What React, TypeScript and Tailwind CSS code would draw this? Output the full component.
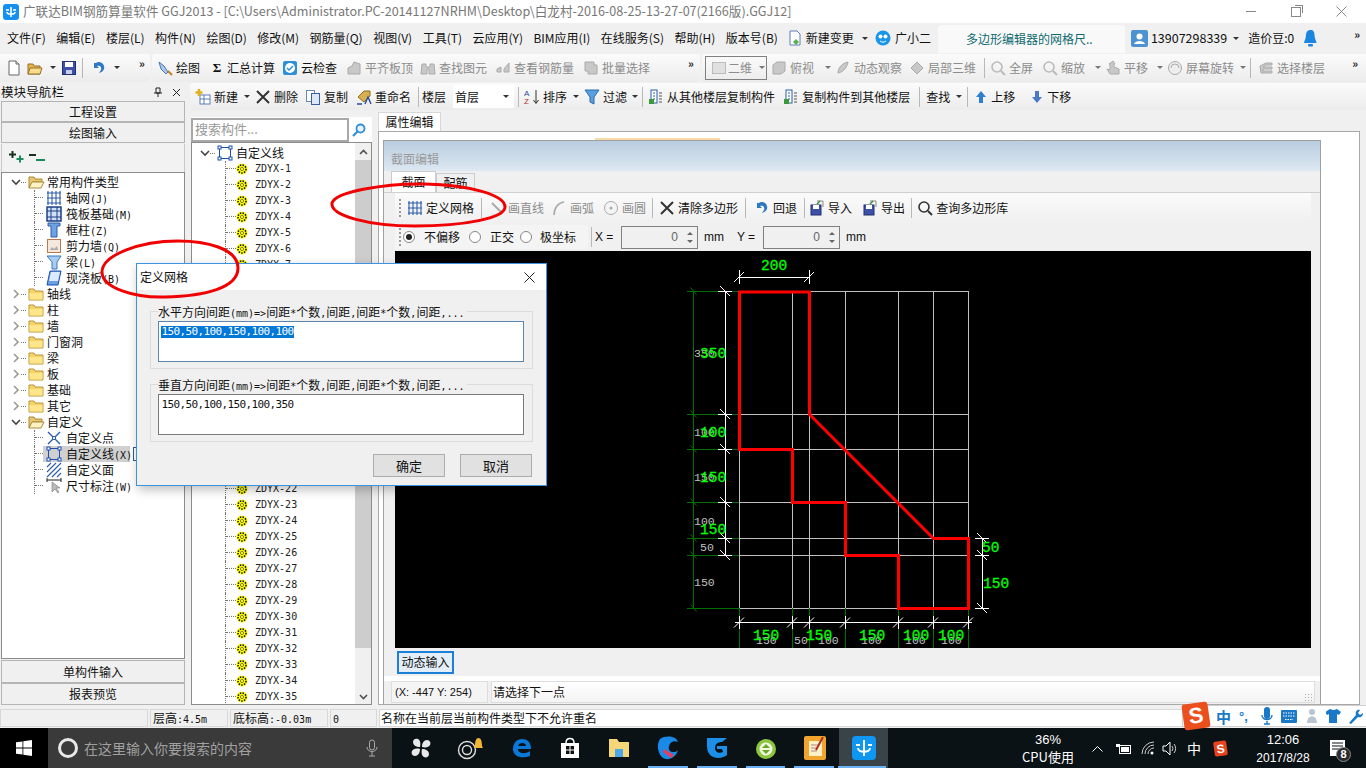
import React from "react";

const mono = "font-['DejaVu_Sans_Mono','Liberation_Mono',monospace] text-[10px]";

// ascii in the old bitmap font is half width, so split it from the chinese
function Mixed({ t }: { t: string }) {
  const parts = t.split(/([\x00-\x7f]+)/).filter(Boolean);
  return (
    <span className="whitespace-pre">
      {parts.map((p, i) =>
        /^[\x00-\x7f]/.test(p) ? (
          <span key={i} className={mono}>{p}</span>
        ) : (
          <span key={i} className="text-[12px]">{p}</span>
        )
      )}
    </span>
  );
}

const Drop = ({ className = "" }: { className?: string }) => (
  <span className={`w-0 h-0 shrink-0 border-l-[3px] border-r-[3px] border-t-[3px] border-l-transparent border-r-transparent border-t-[#333] ${className}`} />
);
const Sep = ({ className = "" }: { className?: string }) => (
  <span className={`w-px h-[20px] shrink-0 bg-[#b8b8b8] ${className}`} />
);
const More = ({ className = "" }: { className?: string }) => (
  <span className={`text-[11px] font-bold leading-none text-[#222] -mt-2 ${className}`}>»</span>
);

function Tool({ icon, label, off, className = "", iconWidth = "w-4" }: { icon: React.ReactNode; label: string; off?: boolean; className?: string; iconWidth?: string }) {
  return (
    <span className={`flex items-center shrink-0 ${className} ${off ? "text-[#8c8c8c]" : "text-[#111]"}`}>
      <span className={`${iconWidth} h-4 flex items-center justify-center shrink-0 mr-[3px]`}>{icon}</span>
      <span className="whitespace-nowrap">{label}</span>
    </span>
  );
}

const Svg = ({ children, size = 16, className = "" }: { children: React.ReactNode; size?: number; className?: string }) => (
  <svg width={size} height={size} viewBox="0 0 16 16" className={`shrink-0 ${className}`}>{children}</svg>
);

const DocIco = () => <Svg><path d="M3 1h7l3 3v11H3z" fill="#fff" stroke="#666" /><path d="M10 1v3h3" fill="#ddd" stroke="#666" /></Svg>;
const OpenIco = () => <Svg><path d="M1 4h5l1 2h6v8H1z" fill="#e8b54a" stroke="#94702a" /><path d="M3 8h12l-2 6H1z" fill="#f7dc8e" stroke="#94702a" /></Svg>;
const SaveIco = () => <Svg><rect x="1.5" y="1.5" width="13" height="13" fill="#3d4fa8" stroke="#22306e" /><rect x="4" y="2" width="8" height="5" fill="#fff" /><rect x="5" y="10" width="6" height="4" fill="#c9cfe6" /></Svg>;
const UndoIco = () => <Svg><path d="M3 3v5h5L6 6c3-1 5 1 4 4l-2 3c4-1 6-4 5-7-1-4-6-5-8-3z" fill="#2f78c4" /></Svg>;
const CrossIco = ({ off }: { off?: boolean }) => <Svg><path d="M2 2l12 12M14 2L2 14" stroke={off ? "#999" : "#333"} strokeWidth="2" /></Svg>;
const ChkIco = () => <Svg><rect x="1" y="1" width="14" height="14" rx="2" fill="#2e8fd8" /><circle cx="8" cy="8" r="5" fill="#fff" /><path d="M5 8l2 2 4-4" stroke="#2e8fd8" strokeWidth="1.5" fill="none" /></Svg>;
const GrayBlob = ({ d = "M3 12L9 3l4 2-3 8z" }: { d?: string }) => <Svg><path d={d} fill="#c8c8c8" stroke="#aaa" /></Svg>;
const LensIco = ({ c = "#bbb" }: { c?: string }) => <Svg><circle cx="7" cy="7" r="5" fill="none" stroke={c} strokeWidth="1.6" /><path d="M11 11l4 4" stroke={c} strokeWidth="2" /></Svg>;
const GridIco = ({ c = "#2a5caa" }: { c?: string }) => <Svg><path d="M2 1v14M6 1v14M10 1v14M14 1v14M1 3h14M1 8h14M1 13h14" stroke={c} strokeWidth="1.1" /></Svg>;
const SquareIco = () => <Svg><rect x="2.5" y="2.5" width="11" height="11" fill="none" stroke="#1c4fae" /><rect x="1" y="1" width="3" height="3" fill="#fff" stroke="#1c4fae" /><rect x="12" y="1" width="3" height="3" fill="#fff" stroke="#1c4fae" /><rect x="1" y="12" width="3" height="3" fill="#fff" stroke="#1c4fae" /><rect x="12" y="12" width="3" height="3" fill="#fff" stroke="#1c4fae" /></Svg>;
const SheetIco = () => <Svg><rect x="3" y="1" width="6" height="13" fill="#fff" stroke="#2a5caa" /><path d="M5 4h2M5 7h2M5 10h2" stroke="#2a5caa" /><rect x="1" y="10" width="5" height="5" fill="#3a9a3a" /><path d="M11 4h3M11 7h3M11 10h3M11 13h3" stroke="#555" /></Svg>;
const DiskIco = () => <Svg><rect x="2" y="5" width="10" height="10" fill="#3d4fa8" stroke="#22306e" /><rect x="4" y="5" width="6" height="4" fill="#fff" /><path d="M8 1h6v6" fill="none" stroke="#888" /><path d="M11 1l-3 3" stroke="#3a8a3a" strokeWidth="1.5" /></Svg>;

const Folder = ({ open }: { open?: boolean }) =>
  open ? (
    <svg width="17" height="13" viewBox="0 0 17 13"><path d="M1 1h5l1 2h7v3H5L1 12z" fill="#e7c66e" stroke="#a98a3c" /><path d="M4 6h12l-3 6H1z" fill="#fff2c4" stroke="#a98a3c" /></svg>
  ) : (
    <svg width="16" height="13" viewBox="0 0 16 13"><path d="M1 1h5l1 2h8v9H1z" fill="#f6d267" stroke="#b8973f" /><path d="M1.5 5h13v6.5h-13z" fill="#ffe68a" /></svg>
  );
const Chev = ({ open }: { open?: boolean }) => (
  <svg width="10" height="10" viewBox="0 0 10 10">
    <path d={open ? "M1 3l4 4 4-4" : "M3 1l4 4-4 4"} fill="none" stroke={open ? "#444" : "#9a9a9a"} strokeWidth="1.6" />
  </svg>
);
const Gear = () => (
  <svg width="12" height="12" viewBox="0 0 12 12"><circle cx="6" cy="6" r="5.6" fill="#ffff00" /><circle cx="6" cy="6" r="4" fill="none" stroke="#111" strokeWidth="1.6" strokeDasharray="1.5 1.2" /><circle cx="6" cy="6" r="1.6" fill="#ffff00" stroke="#333" strokeWidth=".6" /></svg>
);

const rootRows = [
  { t: "轴线" }, { t: "柱" }, { t: "墙" }, { t: "门窗洞" }, { t: "梁" }, { t: "板" }, { t: "基础" }, { t: "其它" },
];

const childIcons: Record<string, React.ReactNode> = {
  "轴网(J)": <GridIco />,
  "筏板基础(M)": <Svg><rect x="1" y="1" width="14" height="14" fill="#cfe0f5" stroke="#1c3f86" strokeWidth="1.5" /><path d="M1 5h14M1 11h14M5 1v14M11 1v14" stroke="#1c3f86" /></Svg>,
  "框柱(Z)": <Svg><path d="M2 1h12v3h-3v11H5V4H2z" fill="#6fa3e0" stroke="#2f5ea8" /></Svg>,
  "剪力墙(Q)": <Svg><rect x="1.5" y="1.5" width="13" height="13" fill="#f4e8dc" stroke="#b9794a" /><path d="M4 12l2-3 2 2 3-3 1 4z" fill="#aaa" /></Svg>,
  "梁(L)": <Svg><path d="M1 2h14l-4 6v7H6V8z" fill="#a9cdf0" stroke="#3a77b8" /></Svg>,
  "现浇板(B)": <Svg><path d="M4 1h11l-3 14H1z" fill="#6b9fe6" stroke="#1c4fae" /><path d="M5 2h9l-2 9H3z" fill="#dbe9fb" /></Svg>,
  "自定义点": <Svg><path d="M2 2l12 12M14 2L2 14" stroke="#2a5caa" strokeWidth="1.4" /><circle cx="8" cy="8" r="1.6" fill="#fff" stroke="#2a5caa" /></Svg>,
  "自定义线(X)": <SquareIco />,
  "自定义面": <Svg><path d="M1 5l4-4M1 10l9-9M1 15L15 1M6 15l9-9M11 15l4-4" stroke="#2a5caa" strokeWidth="1.1" /></Svg>,
  "尺寸标注(W)": <Svg><path d="M1 2h14M1 0v4M15 0v4" stroke="#222" /><path d="M6 4v10l3-3 3 4 1-1-3-4h4z" fill="#bbb" stroke="#777" strokeWidth=".6" /></Svg>,
};

function ChildRow({ t, selected }: { t: string; selected?: boolean }) {
  return (
    <div className="h-4 flex items-center pl-[32px]">
      <span className="w-[9px] self-stretch shrink-0 border-l border-dotted border-[#777]">
        <span className="block h-2 border-b border-dotted border-[#777]" />
      </span>
      <span className={`h-4 flex items-center pl-[3px] shrink-0 ${selected ? "bg-[#d0d0d0] w-[87px]" : ""}`}>
        <span className="w-4 h-4 shrink-0 mr-[4px] flex items-center justify-center">{childIcons[t]}</span>
        <Mixed t={t} />
      </span>
      {selected && <span className="ml-[3px] w-[8px] h-[14px] border border-[#2a5caa] bg-white" />}
    </div>
  );
}

function RootRow({ t, open }: { t: string; open?: boolean }) {
  return (
    <div className="h-4 flex items-center pl-2">
      <span className="w-[11px] flex justify-center"><Chev open={open} /></span>
      <span className="w-[5px] border-b border-dotted border-[#777] mr-[2px]" />
      <span className="w-[17px] flex"><Folder open={open} /></span>
      <span className="ml-[2px]"><Mixed t={t} /></span>
    </div>
  );
}

function NavBtn({ children, h }: { children: React.ReactNode; h: string }) {
  return <div className={`${h} flex items-center justify-center border border-[#b5b5b5] bg-[#f0f0f0] text-[#111]`}><Mixed t={String(children)} /></div>;
}

const zdyx = [1, 2, 3, 4, 5, 6, 7, 8, 9, 11, 12, 13, 14, 15, 16, 17, 18, 19, 20, 21, 22, 23, 24, 25, 26, 27, 28, 29, 30, 31, 32, 33, 34, 35];

function NavPanel() {
  return (
    <div className="w-[187px] shrink-0 flex flex-col pl-[1px] pr-[2px]">
      <div className="h-[17px] flex items-center justify-between pr-[4px] text-[12.5px] text-[#111] pt-[1px]">
        <span className="tracking-[0.1px]">模块导航栏</span>
        <span className="flex items-center gap-[10px]">
          <svg width="8" height="10" viewBox="0 0 8 10"><path d="M2 1h4v5H2zM0 6h8M4 6v4" fill="none" stroke="#222" /></svg>
          <svg width="9" height="9" viewBox="0 0 9 9"><path d="M1 1l7 7M8 1L1 8" stroke="#222" /></svg>
        </span>
      </div>
      <NavBtn h="h-[21px] mt-[1px]">工程设置</NavBtn>
      <NavBtn h="h-[21px]">绘图输入</NavBtn>
      <div className="h-[28px] flex items-center pl-[6px] gap-[4px] bg-[#f2f2f2] border-x border-[#c8c8c8] mt-[1px]">
        <svg width="17" height="16" viewBox="0 0 17 16"><path d="M4.500 1v7M1 4.500h7" stroke="#14321e" strokeWidth="2" /><path d="M12 5.500v7M8.500 9h7" stroke="#1c8a5a" strokeWidth="2" /></svg>
        <svg width="16" height="12" viewBox="0 0 16 12"><path d="M0 3h7" stroke="#14321e" strokeWidth="2" /><path d="M7 8h9" stroke="#1c8a5a" strokeWidth="2" /></svg>
      </div>
      <div className="h-[487px] border border-[#8c8c8c] bg-white overflow-hidden text-[#111]">
        <div className="h-[1px]" />
        <RootRow t="常用构件类型" open />
        {["轴网(J)", "筏板基础(M)", "框柱(Z)", "剪力墙(Q)", "梁(L)", "现浇板(B)"].map((t) => <ChildRow key={t} t={t} />)}
        {rootRows.map((r) => <RootRow key={r.t} t={r.t} />)}
        <RootRow t="自定义" open />
        {["自定义点", "自定义线(X)", "自定义面", "尺寸标注(W)"].map((t) => <ChildRow key={t} t={t} selected={t === "自定义线(X)"} />)}
      </div>
      <NavBtn h="h-[23px] mt-[1px]">单构件输入</NavBtn>
      <NavBtn h="h-[22px]">报表预览</NavBtn>
    </div>
  );
}

function ListPanel() {
  return (
    <div className="w-[186px] shrink-0 flex flex-col bg-[#f0f0f0] pl-[4px] pr-[1px] pt-[7px]">
      <div className="h-[25px] flex items-center bg-white pr-1">
        <div className="w-[158px] h-[24px] border-2 border-[#a8a8a8] flex items-center pl-[2px] pb-[3px] text-[#999] text-[13px]">搜索构件...</div>
        <div className="flex-1 flex justify-center">
          <svg width="14" height="14" viewBox="0 0 14 14"><circle cx="8.500" cy="5.500" r="4" fill="#e8f4ff" stroke="#2f8fd8" strokeWidth="1.8" /><path d="M5.500 8.500L1 13" stroke="#2f8fd8" strokeWidth="2.2" /></svg>
        </div>
      </div>
      <div className="h-[563px] border border-[#8c8c8c] bg-white flex overflow-hidden">
        <div className="flex-1 overflow-hidden text-[#111] pt-[1px]">
          <div className="h-4 flex items-center pl-[7px] mt-[1px]">
            <span className="w-[11px] flex justify-center"><Chev open /></span>
            <span className="w-[5px] border-b border-dotted border-[#777] mr-[2px]" />
            <SquareIco />
            <span className="ml-[3px]"><Mixed t="自定义线" /></span>
          </div>
          {zdyx.map((n) => (
            <div key={n} className="h-4 flex items-center pl-[33px]">
              <span className="w-[11px] self-stretch shrink-0 border-l border-dotted border-[#777]">
                <span className="block h-2 border-b border-dotted border-[#777]" />
              </span>
              <Gear />
              <span className={`ml-[7px] ${mono} text-[#222]`}>ZDYX-{n}</span>
            </div>
          ))}
        </div>
        <div className="w-[16px] shrink-0 flex flex-col bg-[#f0f0f0]">
          <div className="h-[17px] flex items-center justify-center"><svg width="9" height="6" viewBox="0 0 9 6"><path d="M1 5l3.500-3.500L8 5" fill="none" stroke="#505050" strokeWidth="1.6" /></svg></div>
          <div className="h-[488px] bg-[#cdcdcd]" />
          <div className="flex-1 flex items-end justify-center pb-[4px]"><svg width="9" height="6" viewBox="0 0 9 6"><path d="M1 1l3.500 3.500L8 1" fill="none" stroke="#505050" strokeWidth="1.6" /></svg></div>
        </div>
      </div>
    </div>
  );
}

const vx = [739, 792, 809, 845, 898, 933, 968];
const hy = [291, 414, 449, 502, 538, 555, 608];
const leftTicks = [291, 414, 449, 502, 538, 555];

function Cad() {
  const green = "#00ff00";
  const gray = "#c0c0c0";
  const gt = ({ x, y, s }: { x: number; y: number; s: string }) => (
    <text key={`g${x}${y}`} x={x} y={y} fill={gray} fontSize="11.500" className="font-['Liberation_Mono',monospace]">{s}</text>
  );
  const bt = ({ x, y, s }: { x: number; y: number; s: string }) => (
    <text key={`b${x}${y}`} x={x} y={y} fill={green} fontSize="14.500" className="font-['Liberation_Mono',monospace]" stroke={green} strokeWidth=".3">{s}</text>
  );
  return (
    <svg width="916" height="397" viewBox="395 251 916 397" className="block bg-black" shapeRendering="crispEdges">
      {vx.map((x) => <path key={x} d={`M${x + 0.5} 291V608`} stroke={gray} />)}
      {hy.map((y) => <path key={y} d={`M739 ${y + 0.5}H969`} stroke={gray} />)}
      {/* left dim, dark green then white */}
      <path d="M693.500 291V608" stroke="#007000" />
      {hy.map((y) => <path key={y} d={`M687 ${y + 0.5}H739`} stroke="#007000" />)}
      <g shapeRendering="auto">
        {hy.map((y) => <path key={y} d={`M690.500 ${y - 3.500}l6 7`} stroke="#007000" />)}
      </g>
      <path d="M725.500 291V555" stroke="#fff" />
      {leftTicks.map((y) => <path key={y} d={`M718 ${y + 0.5}H732`} stroke="#fff" />)}
      <g shapeRendering="auto">
        {leftTicks.map((y) => <path key={y} d={`M720 ${y - 5}l10 10`} stroke="#fff" />)}
      </g>
      {/* top dim */}
      <path d="M739 277.500H810M739.500 270V284M809.500 270V284" stroke="#fff" />
      <g shapeRendering="auto"><path d="M734 282l10-10M804 282l10-10" stroke="#fff" /></g>
      {/* right dim */}
      <path d="M982.500 538V608M975 538.500H989M975 555.500H989M975 608.500H989" stroke="#fff" />
      <g shapeRendering="auto"><path d="M977 533l10 10M977 550l10 10M977 603l10 10" stroke="#fff" /></g>
      {/* bottom dim */}
      {vx.map((x) => <path key={x} d={`M${x + 0.5} 608V648`} stroke="#007000" />)}
      <path d="M735 622.500H972" stroke="#fff" />
      {vx.map((x) => <path key={x} d={`M${x + 0.5} 616V629`} stroke="#fff" />)}
      <g shapeRendering="auto">{vx.map((x) => <path key={x} d={`M${x - 5} 627.500l10-10`} stroke="#fff" />)}</g>
      {/* polygon */}
      <path d="M739.500 292H809.500V414.500L933.500 538.500H968.500V608.500H898.500V555.500H845.500V502.500H792.500V449.500H739.500Z" fill="none" stroke="#ff0000" strokeWidth="3" shapeRendering="auto" />
      {[
        { x: 694, y: 357, s: "350" }, { x: 694, y: 436, s: "100" }, { x: 694, y: 481, s: "150" }, { x: 694, y: 525, s: "100" }, { x: 700, y: 551, s: "50" }, { x: 694, y: 586, s: "150" },
        { x: 756, y: 644, s: "150" }, { x: 794, y: 644, s: "50" }, { x: 818, y: 644, s: "100" }, { x: 861, y: 644, s: "100" }, { x: 905, y: 644, s: "100" }, { x: 941, y: 644, s: "100" },
      ].map(gt)}
      {[
        { x: 761, y: 270, s: "200" }, { x: 700, y: 358, s: "350" }, { x: 700, y: 437, s: "100" }, { x: 700, y: 482, s: "150" }, { x: 700, y: 534, s: "150" }, { x: 982, y: 552, s: "50" }, { x: 983, y: 588, s: "150" },
        { x: 753, y: 640, s: "150" }, { x: 806, y: 640, s: "150" }, { x: 859, y: 640, s: "150" }, { x: 903, y: 640, s: "100" }, { x: 938, y: 640, s: "100" },
      ].map(bt)}
    </svg>
  );
}

const Radio = ({ on }: { on?: boolean }) => (
  <span className="w-[12px] h-[12px] rounded-full border border-[#888] bg-white flex items-center justify-center shrink-0">
    {on && <span className="w-[6px] h-[6px] rounded-full bg-[#222]" />}
  </span>
);

function Spin({ className = "" }: { className?: string }) {
  return (
    <div className={`w-[77px] h-[23px] border border-[#808080] bg-[#f0f0f0] flex items-center justify-end shrink-0 ${className}`}>
      <span className="text-[#666] mr-[9px] font-['Liberation_Sans',sans-serif]">0</span>
      <span className="flex flex-col gap-[5px] mr-[4px]">
        <span className="w-0 h-0 border-x-[3px] border-b-[3px] border-x-transparent border-b-[#666]" />
        <span className="w-0 h-0 border-x-[3px] border-t-[3px] border-x-transparent border-t-[#666]" />
      </span>
    </div>
  );
}

const Grip = () => <span className="w-px h-[18px] border-l-2 border-dotted border-[#999] shrink-0 ml-[4px]" />;

function EditorWindow() {
  return (
    <div className="w-[938px] h-[564px] border border-[#a0a0a0] border-b-0 flex flex-col bg-[#f0f0f0] overflow-hidden">
      <div className="h-[30px] shrink-0 bg-gradient-to-b from-[#b9cde0] to-[#dde8f2] flex items-end pl-[7px] pb-[6px] text-[#9a9a9a]">截面编辑</div>
      <div className="h-[22px] shrink-0 flex items-end pl-[7px] border-b border-[#cfcfcf]">
        <div className="w-[45px] h-[21px] bg-white border border-[#ccc] border-b-0 flex items-center justify-center">截面</div>
        <div className="w-[39px] h-[19px] bg-[#f0f0f0] border border-[#ccc] border-b-0 flex items-center justify-center">配筋</div>
      </div>
      <div className="h-[29px] shrink-0 ml-[11px] mr-[9px] flex items-center bg-gradient-to-b from-[#fbfbfb] to-[#f0f0f0]">
        <Grip />
        <Tool className="ml-[6px]" icon={<GridIco />} label="定义网格" />
        <Sep className="ml-[7px]" />
        <Tool className="ml-[7px]" off icon={<Svg><path d="M3 3l10 10" stroke="#aaa" strokeWidth="2" /></Svg>} label="画直线" />
        <Tool className="ml-[7px]" off icon={<Svg><path d="M3 15C3 8 7 3 13 2" fill="none" stroke="#aaa" strokeWidth="1.6" /></Svg>} label="画弧" />
        <Tool className="ml-[9px]" off icon={<Svg><circle cx="8" cy="8" r="6.500" fill="#f4f4f4" stroke="#aaa" /><circle cx="8" cy="8" r="1.500" fill="#aaa" /></Svg>} label="画圆" />
        <Sep className="ml-[6px]" />
        <Tool className="ml-[6px]" icon={<CrossIco />} label="清除多边形" />
        <Sep className="ml-[7px]" />
        <Tool className="ml-[8px]" icon={<UndoIco />} label="回退" />
        <Sep className="ml-[7px]" />
        <Tool className="ml-[4px]" icon={<DiskIco />} label="导入" />
        <Tool className="ml-[10px]" icon={<DiskIco />} label="导出" />
        <Sep className="ml-[6px]" />
        <Tool className="ml-[5px]" icon={<LensIco c="#333" />} label="查询多边形库" />
      </div>
      <div className="h-[24px] shrink-0 ml-[11px] mt-[3px] flex items-center">
        <div className="flex items-center h-full bg-[#f4f4f4] w-[193px]">
          <Grip />
          <span className="ml-[2px]"><Radio on /></span><span className="ml-[9px]">不偏移</span>
          <span className="ml-[9px]"><Radio /></span><span className="ml-[9px]">正交</span>
          <span className="ml-[6px]"><Radio /></span><span className="ml-[8px]">极坐标</span>
        </div>
        <Sep className="ml-[3px]" />
        <span className="ml-[3px] w-[26px] font-['Liberation_Sans',sans-serif]">X =</span>
        <Spin />
        <span className="ml-[6px] font-['Liberation_Sans',sans-serif]">mm</span>
        <span className="ml-[13px] w-[26px] font-['Liberation_Sans',sans-serif]">Y =</span>
        <Spin />
        <span className="ml-[6px] font-['Liberation_Sans',sans-serif]">mm</span>
      </div>
      <div className="ml-[11px] mt-[2px]"><Cad /></div>
      <div className="h-[28px] shrink-0 ml-[13px] flex items-center">
        <div className="w-[57px] h-[23px] border-2 border-[#1c80d8] bg-[#e3eef8] flex items-center justify-center">动态输入</div>
      </div>
      <div className="h-[5px] shrink-0 bg-white" />
      <div className="h-[22px] shrink-0 flex gap-[3px] pl-[7px] pr-[5px]">
        <div className="w-[97px] bg-[#f4f4f4] border border-[#ddd] flex items-center pl-[3px] text-[11px] font-['Liberation_Sans',sans-serif]">(X: -447 Y: 254)</div>
        <div className="flex-1 bg-gradient-to-b from-white to-[#f4f4f4] border border-[#ddd] flex items-center justify-between pl-[1px] pr-[1px]">
          请选择下一点
          <span className="w-[9px] h-[9px] self-end bg-[radial-gradient(#aaa_1px,transparent_1px)] bg-[length:3px_3px]" />
        </div>
      </div>
    </div>
  );
}

function Toolbar2() {
  return (
    <div className="h-[27px] flex items-center ml-[3px] bg-gradient-to-b from-[#fbfbfb] to-[#ececec] rounded-l-[3px] text-[#111]">
      <Tool className="ml-[5px]" icon={<Svg><rect x="5" y="6" width="10" height="9" fill="#fff" stroke="#5a7fb8" /><path d="M5 10h10M9 6v9" stroke="#5a7fb8" /><path d="M4 0v7M0.500 3.500h7" stroke="#e0b020" strokeWidth="2.500" /></Svg>} label="新建" />
      <Drop className="ml-[6px]" />
      <Tool className="ml-[5px]" icon={<CrossIco />} label="删除" />
      <Tool className="ml-[7px]" icon={<Svg><rect x="1.500" y="1.500" width="8" height="11" fill="#fff" stroke="#6a86b8" /><rect x="6.500" y="4.500" width="8" height="11" fill="#dce8f8" stroke="#3a5f9e" /></Svg>} label="复制" />
      <Tool className="ml-[8px]" icon={<Svg><path d="M2 8l6-6h6v5l-6 6z" fill="#d8b050" stroke="#8c6c20" /><path d="M1 15h5M9 15l3-7 3 7" stroke="#2a4c9a" strokeWidth="1.4" fill="none" /></Svg>} label="重命名" />
      <Sep className="ml-[7px]" />
      <span className="ml-[3px]">楼层</span>
      <div className="ml-[7px] w-[61px] h-[23px] bg-white flex items-center justify-between pl-[2px] pr-[5px]">首层<Drop /></div>
      <Sep className="ml-[4px]" />
      <Tool className="ml-[5px]" icon={<Svg><text x="0" y="7" fontSize="8" fill="#2a4c9a" className="font-['Liberation_Sans',sans-serif]">A</text><text x="0" y="15" fontSize="8" fill="#b03030" className="font-['Liberation_Sans',sans-serif]">Z</text><path d="M12 1v13M9.500 11l2.500 3.500L14.500 11" fill="none" stroke="#333" /></Svg>} label="排序" />
      <Drop className="ml-[6px]" />
      <Tool className="ml-[5px]" icon={<Svg><path d="M1 1h14L10 8v7l-4-2V8z" fill="#5aa0e0" stroke="#2a6ca8" /></Svg>} label="过滤" />
      <Drop className="ml-[5px]" />
      <Sep className="ml-[4px]" />
      <Tool className="ml-[5px]" icon={<SheetIco />} label="从其他楼层复制构件" />
      <Tool className="ml-[8px]" icon={<SheetIco />} label="复制构件到其他楼层" />
      <Sep className="ml-[9px]" />
      <span className="ml-[6px]">查找</span>
      <Drop className="ml-[6px]" />
      <Sep className="ml-[5px]" />
      <Tool className="ml-[6px]" iconWidth="w-[14px]" icon={<svg width="10" height="12" viewBox="0 0 10 12"><path d="M5 0l5 6H7v6H3V6H0z" fill="#2f7fd0" /></svg>} label="上移" />
      <Tool className="ml-[15px]" iconWidth="w-[14px]" icon={<svg width="10" height="12" viewBox="0 0 10 12"><path d="M5 12l5-6H7V0H3v6H0z" fill="#4a78c8" /></svg>} label="下移" />
    </div>
  );
}

const menus = ["文件(F)", "编辑(E)", "楼层(L)", "构件(N)", "绘图(D)", "修改(M)", "钢筋量(Q)", "视图(V)", "工具(T)", "云应用(Y)", "BIM应用(I)", "在线服务(S)", "帮助(H)", "版本号(B)"];

function TaskIcon({ children, className = "" }: { children: React.ReactNode; className?: string }) {
  return <div className={`w-[49px] h-full flex items-center justify-center relative shrink-0 ${className}`}>{children}</div>;
}

export default function App() {
  return (
    <div className="relative w-[1366px] h-[768px] overflow-hidden bg-[#f0f0f0] flex flex-col text-[12px] leading-none text-[#111] font-['Noto_Sans_CJK_SC','Liberation_Sans',sans-serif]">
      {/* title */}
      <div className="h-[23px] shrink-0 bg-white flex items-center">
        <svg width="16" height="16" viewBox="0 0 16 16" className="ml-[3px] mr-[4px]"><rect width="16" height="16" rx="3" fill="#1390f0" /><path d="M8 3v10M4 8c0 3 8 3 8 0" fill="none" stroke="#fff" strokeWidth="1.6" /><path d="M3 6h3M10 6h3" stroke="#fff" strokeWidth="1.6" /></svg>
        <span className="text-[#777] text-[12.6px] whitespace-nowrap">广联达BIM钢筋算量软件 GGJ2013 - [C:\Users\Administrator.PC-20141127NRHM\Desktop\白龙村-2016-08-25-13-27-07(2166版).GGJ12]</span>
        <div className="ml-auto flex items-center h-full mr-[19px] gap-[35px]">
          <span className="w-[10px] h-px bg-[#888]" />
          <span className="w-[10px] h-[10px] border border-[#888] relative"><span className="absolute -top-[3px] -right-[3px] w-[8px] h-[8px] border-t border-r border-[#888]" /></span>
          <svg width="11" height="11" viewBox="0 0 11 11"><path d="M.5.500l10 10M10.500.500l-10 10" stroke="#888" /></svg>
        </div>
      </div>
      {/* menu */}
      <div className="h-[30px] shrink-0 flex items-center">
        <div className="flex items-center gap-[10.5px] pl-[7px] font-['Noto_Sans_CJK_SC','Liberation_Sans',sans-serif]">
          {menus.map((m) => <span key={m} className="whitespace-nowrap">{m}</span>)}
        </div>
        <Tool className="ml-[9px]" icon={<Svg><path d="M3 1h7l3 3v11H3z" fill="#fff" stroke="#5a7fb8" /><path d="M9 9l3 3-3 3-3-3z" fill="#5ab04a" /></Svg>} label="新建变更" />
        <Drop className="ml-[8px]" />
        <Tool className="ml-[7px]" iconWidth="w-[17px]" icon={<svg width="16" height="16" viewBox="0 0 16 16"><circle cx="8" cy="8" r="7.500" fill="#1a96e8" /><circle cx="5.500" cy="6.500" r="2" fill="#fff" /><circle cx="10.500" cy="6.500" r="2" fill="#fff" /><path d="M5 11c2 1.500 4 1.500 6 0" stroke="#fff" fill="none" /></svg>} label="广小二" />
        <div className="ml-[7px] w-[187px] h-[28px] self-end bg-[#f9f9f9] rounded-t-[4px] flex items-center pl-[28px] text-[#0f6a70] text-[12px] whitespace-nowrap">多边形编辑器的网格尺..</div>
        <div className="ml-[6px] flex items-center">
          <svg width="17" height="17" viewBox="0 0 17 17"><rect width="17" height="17" rx="2" fill="#4c93d0" /><circle cx="8.500" cy="6.500" r="3" fill="#fff" /><path d="M3 14c1-4 10-4 11 0z" fill="#fff" /></svg>
          <span className="ml-[3px] text-[12.5px] font-['Noto_Sans_CJK_SC',sans-serif]">13907298339</span>
          <Drop className="ml-[6px]" />
          <span className="ml-[9px] whitespace-nowrap">造价豆:0</span>
          <svg width="13" height="18" viewBox="0 0 13 18" className="ml-[10px]"><path d="M6.500 1c3 0 4 2 4 5 0 4 2 6 2 8H0c0-2 2-4 2-8 0-3 1.500-5 4.500-5z" fill="#1a86e0" /><rect x="4" y="15" width="5" height="2.500" rx="1" fill="#1a86e0" /></svg>
        </div>
        <More className="ml-auto mr-[6px]" />
      </div>
      {/* toolbar 1 */}
      <div className="h-[30px] shrink-0 flex items-center gap-[2px] pb-[1px]">
        <div className="w-[150px] h-[28px] flex items-center bg-gradient-to-b from-[#fbfbfb] to-[#ececec] rounded-r-[3px] shrink-0">
          <span className="ml-[6px]"><DocIco /></span>
          <span className="ml-[5px]"><OpenIco /></span>
          <Drop className="ml-[7px]" />
          <span className="ml-[5px]"><SaveIco /></span>
          <Sep className="ml-[5px]" />
          <span className="ml-[8px]"><UndoIco /></span>
          <Drop className="ml-[7px]" />
          <More className="ml-[19px]" />
        </div>
        <div className="w-[548px] h-[28px] flex items-center bg-gradient-to-b from-[#fbfbfb] to-[#ececec] rounded-[3px] shrink-0">
          <Tool className="ml-[5px]" icon={<Svg><path d="M2 2l5 4 4 6-2 2-5-5z" fill="#a9c9ec" stroke="#4d77ae" /><path d="M11 11l4 4" stroke="#c08020" strokeWidth="2" /></Svg>} label="绘图" />
          <Tool className="ml-[10px]" iconWidth="w-[14px]" icon={<span className="font-bold text-[13px] font-['Liberation_Serif',serif]">Σ</span>} label="汇总计算" />
          <Tool className="ml-[7px]" icon={<ChkIco />} label="云检查" />
          <Tool className="ml-[9px]" off icon={<GrayBlob d="M2 14V8l4-2 2-4 6 2v10z" />} label="平齐板顶" />
          <Tool className="ml-[7px]" off icon={<GrayBlob d="M2 4h4v3h4V4h4l1 10H9V9H7v5H1z" />} label="查找图元" />
          <Tool className="ml-[8px]" off icon={<GrayBlob d="M2 9l4-2v5H2zM9 9l5-6v9H9z" />} label="查看钢筋量" />
          <Tool className="ml-[9px]" off icon={<GrayBlob d="M2 2h9v3h3v9H5v-3H2z" />} label="批量选择" />
          <More className="ml-[38px]" />
        </div>
        <div className="flex-1 h-[28px] flex items-center bg-gradient-to-b from-[#fbfbfb] to-[#ececec] rounded-l-[3px]">
          <div className="ml-[3px] w-[62px] h-[24px] border border-[#808080] flex items-center pl-[6px] text-[#8c8c8c] shrink-0">
            <span className="w-[14px] h-[12px] bg-[#e0e0e0] border border-[#bbb] mr-[1px]" />
            <span className="ml-[1px]">二维</span>
            <Drop className="ml-[7px] border-t-[#777]" />
          </div>
          <Tool className="ml-[4px]" off icon={<GrayBlob d="M2 5l4-3h8v9l-4 3H2z" />} label="俯视" />
          <Drop className="ml-[11px] border-t-[#777]" />
          <Tool className="ml-[4px]" off icon={<GrayBlob d="M3 13c0-6 5-10 10-11-1 6-5 10-10 11z" />} label="动态观察" />
          <Tool className="ml-[7px]" off icon={<GrayBlob d="M2 8l6-6 6 6-6 6z" />} label="局部三维" />
          <Sep className="ml-[8px]" />
          <Tool className="ml-[5px]" off icon={<LensIco />} label="全屏" />
          <Tool className="ml-[9px]" off icon={<LensIco />} label="缩放" />
          <Drop className="ml-[10px] border-t-[#777]" />
          <Tool className="ml-[4px]" off icon={<GrayBlob d="M8 1l2 3H9v3l5 2v5H5L2 9l3 1V4H4z" />} label="平移" />
          <Drop className="ml-[9px] border-t-[#777]" />
          <Tool className="ml-[4px]" off icon={<Svg><circle cx="8" cy="8" r="6.500" fill="#eee" stroke="#aaa" /><path d="M4 8a4 4 0 018 0" fill="none" stroke="#aaa" /></Svg>} label="屏幕旋转" />
          <Drop className="ml-[6px] border-t-[#777]" />
          <Sep className="ml-[4px]" />
          <Tool className="ml-[7px]" off icon={<GrayBlob d="M2 6l6-3h6v2H8L5 7h9v2H5v2h9v2H3z" />} label="选择楼层" />
          <More className="ml-[27px]" />
        </div>
      </div>
      {/* body */}
      <div className="h-[625px] shrink-0 flex">
        <NavPanel />
        <div className="flex-1 flex flex-col min-w-0">
          <Toolbar2 />
          <div className="flex h-[598px]">
            <ListPanel />
            <div className="flex-1 flex flex-col pl-[5px] pr-[6px] pb-[3px]">
              <div className="h-[20px] shrink-0 mt-[1px] flex items-end">
                <div className="w-[63px] h-[19px] bg-white flex items-center justify-center border-t border-x border-[#d8d8d8]">属性编辑</div>
              </div>
              <div className="flex-1 bg-white border border-[#a8a8a8] pl-[4px] pt-[8px] relative">
                <div className="absolute left-[216px] top-[6px] w-[125px] h-[2px] bg-[#f6d9a6]" />
                <EditorWindow />
              </div>
            </div>
          </div>
        </div>
      </div>
      {/* status */}
      <div className="h-[20px] shrink-0 flex items-stretch gap-[2px] bg-[#f0f0f0] py-[1px]">
        <div className="w-[148px] border border-[#d8d8d8]" />
        <div className="w-[78px] border border-[#d8d8d8] pl-[2px] flex items-center"><Mixed t="层高:4.5m" /></div>
        <div className="w-[98px] border border-[#d8d8d8] pl-[2px] flex items-center"><Mixed t="底标高:-0.03m" /></div>
        <div className="w-[47px] border border-[#d8d8d8] pl-[2px] flex items-center"><Mixed t="0" /></div>
        <div className="flex-1 bg-white border border-[#d8d8d8] pl-[1px] flex items-center">名称在当前层当前构件类型下不允许重名</div>
      </div>
      {/* taskbar */}
      <div className="h-[40px] shrink-0 flex items-center bg-[#0b1216] text-white">
        <div className="w-[48px] h-full bg-black flex items-center justify-center">
          <svg width="16" height="16" viewBox="0 0 16 16" fill="#fff"><path d="M0 2.300l6.500-.9v6.200H0zM7.300 1.300L16 0v7.600H7.300zM0 8.400h6.500v6.200L0 13.700zM7.300 8.400H16V16l-8.700-1.300z" /></svg>
        </div>
        <div className="w-[344px] h-full bg-[#3a3a3a] flex items-center pl-[10px] pr-[14px]">
          <span className="w-[20px] h-[20px] rounded-full border-[3px] border-[#e8e8e8] shrink-0" />
          <span className="ml-[6px] text-[14px] text-[#a0a0a0] whitespace-nowrap">在这里输入你要搜索的内容</span>
          <svg width="12" height="18" viewBox="0 0 12 18" className="ml-auto"><rect x="3.500" y="1" width="5" height="10" rx="2.500" fill="none" stroke="#aaa" /><path d="M1 8c0 6 10 6 10 0M6 13v4M3 17h6" fill="none" stroke="#aaa" /></svg>
        </div>
        <div className="flex items-center h-full ml-[2px]">
          <TaskIcon className="ml-[2px]"><svg width="22" height="22" viewBox="0 0 22 22" fill="#e8e8e8"><path d="M10 10C6 10 3 8 3 5s3-4 5-3 3 4 2 8zM12 10c0-4 2-7 5-7s4 3 3 5-4 3-8 2zM12 12c4 0 7 2 7 5s-3 4-5 3-3-4-2-8zM10 12c0 4-2 7-5 7s-4-3-3-5 4-3 8-2z" /></svg></TaskIcon>
          <TaskIcon><svg width="28" height="26" viewBox="0 0 28 26"><circle cx="11" cy="15" r="8.500" fill="none" stroke="#ddd" strokeWidth="1.400" /><circle cx="11" cy="15" r="4.500" fill="none" stroke="#ddd" strokeWidth="1.400" /><path d="M19 11c0-5 1-8 3.500-8S26 6 26 11l1 2H18z" fill="#f2b632" /></svg></TaskIcon>
          <TaskIcon className="ml-[3px]"><svg width="22" height="22" viewBox="0 0 22 22"><path d="M2 12C2 6 6 2 11 2c6 0 9 4 9 10H7c0 4 6 6 12 2v5c-8 3-17 1-17-7zM7 9h8c0-4-7-4-8 0z" fill="#0a78d8" /></svg></TaskIcon>
          <TaskIcon className="-ml-[1px]"><svg width="20" height="22" viewBox="0 0 20 22"><path d="M1 6h18v15H1z" fill="#fff" /><path d="M6 6c0-6 8-6 8 0" fill="none" stroke="#fff" strokeWidth="1.500" /><path d="M6 9h3.500v3.500H6zM10.500 9H14v3.500h-3.500zM6 13.500h3.500V17H6zM10.500 13.500H14V17h-3.500z" fill="#111" /></svg></TaskIcon>
          <TaskIcon><svg width="22" height="20" viewBox="0 0 22 20"><path d="M1 1h8l2 3h10v15H1z" fill="#f5d77a" /><path d="M7 11h8v8H7z" fill="#4aa8e8" /></svg></TaskIcon>
          <TaskIcon><svg width="24" height="26" viewBox="0 0 24 26"><path d="M4 4c6-4 16-3 18 3-4-2-8 0-9 4-2 6 6 8 9 4-2 8-10 11-15 8C2 19 0 10 4 4z" fill="#1a8ae8" /><path d="M8 14l10 6-3 3-8-6z" fill="#e04060" /></svg></TaskIcon>
          <TaskIcon><svg width="24" height="26" viewBox="0 0 24 26"><path d="M2 3h20l-5 4c-4 0-7 2-7 6s4 6 8 4l-1-3h-5v-3h10v9c-4 4-20 6-20-9z" fill="#1c8fe8" /></svg></TaskIcon>
          <TaskIcon><svg width="24" height="24" viewBox="0 0 24 24"><circle cx="12" cy="13" r="10" fill="#8cc63f" /><circle cx="12" cy="13" r="6.500" fill="#f0f8e0" /><path d="M8 12l4-4 4 4zM8 14h8l-4 4z" fill="#6aa82a" /></svg></TaskIcon>
          <TaskIcon><svg width="24" height="26" viewBox="0 0 24 26"><rect x="1" y="1" width="22" height="24" rx="2" fill="#f2a52e" /><path d="M6 6h13v15H6z" fill="#fff0c8" /><path d="M8 10h7M8 13h7M8 16h6" stroke="#a88" /><path d="M20 2l-7 13" stroke="#b03020" strokeWidth="2" /></svg></TaskIcon>
          <TaskIcon className="bg-[#3a4348]"><svg width="24" height="24" viewBox="0 0 24 24"><rect width="24" height="24" rx="4" fill="#0f96f0" /><path d="M12 4v16M6 12c0 5 12 5 12 0" fill="none" stroke="#fff" strokeWidth="2" /><path d="M4 9h4M16 9h4" stroke="#fff" strokeWidth="2" /></svg></TaskIcon>
        </div>
        <div className="ml-[135px] w-[50px] flex flex-col items-center gap-[4px] text-[13px] whitespace-nowrap">
          <span className="font-['Liberation_Sans',sans-serif] text-[13px]">36%</span>
          <span>CPU使用</span>
        </div>
        <svg width="11" height="7" viewBox="0 0 11 7" className="ml-[19px]"><path d="M.5 6.500l5-5 5 5" fill="none" stroke="#fff" /></svg>
        <svg width="15" height="13" viewBox="0 0 15 13" className="ml-[13px]"><rect x="3.500" y="3.500" width="11" height="8" fill="none" stroke="#fff" /><rect x="5" y="5" width="8" height="5" fill="#fff" /><path d="M0 2h4v3H0z" fill="#fff" /></svg>
        <svg width="14" height="14" viewBox="0 0 14 14" className="ml-[10px]"><path d="M1 13A12 12 0 0113 1M4 13a9 9 0 019-9M7 13a6 6 0 016-6" fill="none" stroke="#ccc" /><circle cx="11" cy="12" r="1.500" fill="#fff" /></svg>
        <svg width="15" height="15" viewBox="0 0 15 15" className="ml-[7px]"><path d="M1 5h3l4-4v13l-4-4H1z" fill="none" stroke="#fff" /><path d="M10 5a4 4 0 010 5M12 3a7 7 0 010 9" fill="none" stroke="#ccc" /></svg>
        <span className="ml-[10px] text-[14px]">中</span>
        <span className="ml-[13px] w-[13px] h-[15px] bg-[#e8431f] rotate-[-8deg] rounded-[2px] flex items-center justify-center text-[12px] font-bold font-['Liberation_Sans',sans-serif]">S</span>
        <div className="ml-[26px] w-[60px] flex flex-col items-center gap-[6px] font-['Liberation_Sans',sans-serif] whitespace-nowrap">
          <span className="text-[13px]">12:06</span>
          <span className="text-[12px]">2017/8/28</span>
        </div>
        <div className="ml-[17px] relative w-[15px] h-[16px] border-b-[3px] border-white">
          <svg width="15" height="13" viewBox="0 0 15 13"><rect width="15" height="13" fill="#fff" /><path d="M2 3h11M2 6h11M2 9h8" stroke="#0b1216" /></svg>
          <span className="absolute left-[6px] top-[7px] w-[15px] h-[15px] rounded-full bg-[#2b2b2b] border border-[#888] flex items-center justify-center text-[11px] font-bold font-['Liberation_Sans',sans-serif]">8</span>
        </div>
      </div>

      {/* task underlines */}
      <div className="absolute left-[648px] bottom-0 h-[2px] w-[240px] flex gap-[9px]">
        <span className="w-[40px] bg-[#6ab0f5]" />
        <span className="w-[40px] bg-[#6ab0f5]" />
        <span className="w-[39px] bg-[#6ab0f5]" />
        <span className="w-[40px] bg-[#6ab0f5]" />
        <span className="w-[48px] -ml-[5px] bg-[#6ab0f5]" />
      </div>

      {/* sogou bar */}
      <div className="absolute left-[1182px] top-[705px] w-[184px] h-[22px] bg-white border-y border-l border-[#d0d0d0] flex items-center">
        <span className="w-[26px] h-[26px] shrink-0 bg-[#ec4f1e] rotate-[-8deg] rounded-[3px] text-white text-[22px] font-bold flex items-center justify-center font-['Liberation_Sans',sans-serif]">S</span>
        <span className="ml-[7px] text-[#1a78c8] text-[15px] font-bold">中</span>
        <span className="ml-[8px] w-[10px] text-[#1a78c8] text-[13px] font-bold font-['Liberation_Sans',sans-serif]">°,</span>
        <svg width="12" height="18" viewBox="0 0 12 18" className="ml-[12px]"><rect x="3" y="0" width="6" height="12" rx="3" fill="#1a78c8" /><path d="M1 8c0 6 10 6 10 0M6 14v3M3 17h6" fill="none" stroke="#1a78c8" strokeWidth="1.400" /></svg>
        <svg width="16" height="13" viewBox="0 0 16 13" className="ml-[8px]"><rect width="16" height="13" rx="1" fill="#1a78c8" /><path d="M2 3h12M2 6h12M4 9.500h8" stroke="#fff" strokeDasharray="1.500 1" /></svg>
        <svg width="14" height="16" viewBox="0 0 14 16" className="ml-[9px]"><circle cx="6" cy="4" r="3" fill="#b8c4d0" /><path d="M1 15c0-9 10-9 10 0z" fill="#b8c4d0" /></svg>
        <svg width="15" height="14" viewBox="0 0 15 14" className="ml-[6px]"><path d="M4 0l3 1 1 0 3-1 4 3-2 3-2-1v9H3V5L1 6-1 3z" fill="#1a78c8" /></svg>
        <svg width="15" height="15" viewBox="0 0 15 15" className="ml-[7px]"><path d="M1 14l7-8c-1-3 1-6 4-5l-2 3 2 2 3-2c0 4-3 5-5 4l-7 7z" fill="#1a78c8" /></svg>
      </div>

      {/* dialog */}
      <div className="absolute left-[136px] top-[263px] w-[411px] h-[223px] border border-[#3c93e0] bg-[#f0f0f0] shadow-[2px_4px_10px_rgba(0,0,0,0.25)] flex flex-col">
        <div className="h-[26px] shrink-0 bg-white flex items-center justify-between pl-[3px] pr-[11px]">
          <span>定义网格</span>
          <svg width="11" height="11" viewBox="0 0 11 11"><path d="M.5.500l10 10M10.500.500l-10 10" stroke="#222" /></svg>
        </div>
        <div className="flex-1 pl-[13px] pr-[13px] pt-[21px]">
          {[
            { legend: "水平方向间距(mm)=>间距*个数,间距,间距*个数,间距,...", selected: true, v: "150,50,100,150,100,100", box: "border-[#5d86ab]" },
            { legend: "垂直方向间距(mm)=>间距*个数,间距,间距*个数,间距,...", selected: false, v: "150,50,100,150,100,350", box: "border-[#7a7a7a]" },
          ].map((g) => (
            <div key={g.legend} className="relative h-[58px] border border-[#dcdcdc] mb-[15px] px-[7px] pt-[9px]">
              <span className="absolute left-[7px] -top-[7px] bg-[#f0f0f0] pr-[3px] text-[#111] leading-[14px]"><Mixed t={g.legend} /></span>
              <div className={`w-[366px] h-[41px] bg-white border ${g.box} pl-[2px] pt-[4px] flex items-start`}>
                <span className={`font-['DejaVu_Sans_Mono','Liberation_Mono',monospace] text-[11px] tracking-[-0.62px] leading-[12px] px-[0.5px] ${g.selected ? "bg-[#0078d7] text-white" : "text-[#111]"}`}>{g.v}</span>
              </div>
            </div>
          ))}
          <div className="flex justify-end gap-[15px] pr-[1px] -mt-[3px]">
            <div className="w-[72px] h-[23px] bg-[#e1e1e1] border border-[#adadad] flex items-center justify-center text-[13px]">确定</div>
            <div className="w-[72px] h-[23px] bg-[#e1e1e1] border border-[#adadad] flex items-center justify-center text-[13px]">取消</div>
          </div>
        </div>
      </div>

      {/* hand drawn marks */}
      <svg width="1366" height="768" viewBox="0 0 1366 768" className="absolute left-0 top-0 pointer-events-none">
        <path d="M238 268C238 248 205 241 178 241C140 241 102 255 102 272C102 288 135 298 165 297C205 296 238 288 238 268Z" fill="none" stroke="#f00000" strokeWidth="3" />
        <path d="M332 203C335 192 385 183 425 184C470 185 505 195 505 207C505 218 465 226 415 226C370 226 330 216 332 203Z" fill="none" stroke="#f00000" strokeWidth="3" />
      </svg>
    </div>
  );
}
